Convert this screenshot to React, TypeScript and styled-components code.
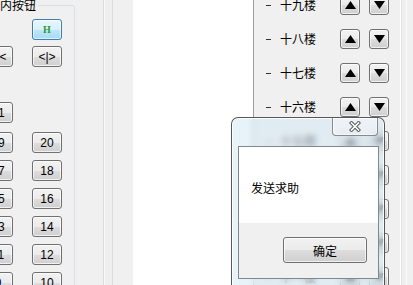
import React from 'react';
import styled, { createGlobalStyle, css } from 'styled-components';

const GlobalStyle = createGlobalStyle`
  html, body { margin: 0; padding: 0; }
  body {
    font-family: "Noto Sans CJK SC", "Liberation Sans", sans-serif;
    font-size: 12px;
    color: #000;
  }
`;

const Screen = styled.div`
  position: relative;
  width: 413px;
  height: 285px;
  overflow: hidden;
  display: flex;
  background: #f0f0f0;
`;

const LeftPane = styled.div`
  flex: none;
  width: 103px;
  height: 100%;
  overflow: hidden;
  background: #f0f0f0;
`;

const GroupBox = styled.fieldset`
  margin: -2px 0 0 -40px;
  width: 115px;
  height: 400px;
  box-sizing: border-box;
  border: 1px solid #d5dfe5;
  border-radius: 3px;
  padding: 7px 0 0 22px;
  display: flex;
  flex-direction: column;
`;

const Legend = styled.legend`
  margin-left: -9px;
  padding: 0 2px;
  font-size: 12px;
  line-height: 14px;
`;

const ButtonRow = styled.div<{ $gap: number }>`
  display: flex;
  gap: 19px;
  height: 21px;
  margin-top: ${p => p.$gap}px;
`;

const Slot = styled.div`
  flex: none;
  width: 30px;
  height: 21px;
`;

const winButton = css`
  box-sizing: border-box;
  border: 1px solid #707070;
  border-radius: 3px;
  background: linear-gradient(#f2f2f2 0%, #ebebeb 50%, #dddddd 51%, #cfcfcf 100%);
  box-shadow: inset 0 0 0 1px rgba(255, 255, 255, 0.7);
  display: flex;
  align-items: center;
  justify-content: center;
  padding: 0;
  color: #000;
`;

const PanelButton = styled.div<{ $focused?: boolean }>`
  ${winButton}
  width: 30px;
  height: 21px;
  font-family: "Liberation Sans", "Noto Sans CJK SC", sans-serif;
  font-size: 12px;
  white-space: nowrap;
  ${p =>
    p.$focused &&
    css`
      border-color: #3c7fb1;
      background: linear-gradient(#eaf6fd 0%, #d9f0fc 50%, #bee6fd 51%, #a7d9f5 100%);
      box-shadow: inset 0 0 0 1px rgba(255, 255, 255, 0.6);
    `}
`;

const AlarmGlyph = styled.span`
  font-family: "Liberation Serif", serif;
  font-weight: bold;
  font-size: 10px;
  color: #23a02a;
`;

const FrameEdge = styled.div`
  flex: none;
  width: 8px;
  height: 100%;
  background: #eeeeee;
  border-left: 1px solid #dcdcdc;
  border-right: 1px solid #dcdcdc;
  box-shadow: inset 1px 0 0 #fafafa;
`;

const GrayStrip = styled.div`
  flex: none;
  width: 20px;
  height: 100%;
  background: #f0f0f0;
`;

const WhiteArea = styled.div`
  flex: none;
  width: 120px;
  height: 100%;
  background: #ffffff;
`;

const RightPane = styled.div`
  flex: 1;
  display: flex;
  height: 100%;
  border-left: 1px solid #9c9c9c;
  background: #f0f0f0;
`;

const FloorList = styled.div`
  flex: none;
  display: flex;
  flex-direction: column;
  gap: 14px;
  margin-top: -5px;
  padding-left: 12px;
  width: 123px;
`;

const FloorRow = styled.div`
  display: flex;
  align-items: center;
  height: 20px;
`;

const Dash = styled.span`
  flex: none;
  width: 5px;
  height: 0;
  border-top: 1px solid #333;
  margin-right: 9px;
`;

const FloorName = styled.span`
  flex: none;
  width: 60px;
  font-size: 12px;
  line-height: 20px;
`;

const ArrowButton = styled.div<{ $spaced?: boolean }>`
  ${winButton}
  flex: none;
  width: 20px;
  height: 20px;
  margin-left: ${p => (p.$spaced ? 9 : 0)}px;
`;

const RightEdge = styled.div`
  margin-left: auto;
  width: 12px;
  height: 100%;
  border-left: 1px solid #ffffff;
  box-shadow: inset 1px 0 0 #e2e2e2, inset 5px 0 0 #f0f0f0, inset 6px 0 0 #fbfbfb;
`;

const Dialog = styled.div`
  position: absolute;
  left: 231px;
  top: 117px;
  width: 154px;
  height: 190px;
  box-sizing: border-box;
  border: 1px solid rgba(50, 50, 50, 0.8);
  border-radius: 7px 7px 0 0;
  background: rgba(214, 232, 244, 0.55);
  backdrop-filter: blur(3px);
  box-shadow: inset 0 0 0 1px rgba(255, 255, 255, 0.85);
  padding: 28px 5px 0 6px;
`;

const CloseButton = styled.div`
  position: absolute;
  top: 0;
  right: 6px;
  width: 46px;
  height: 18px;
  box-sizing: border-box;
  border: 1px solid rgba(70, 70, 70, 0.6);
  border-top: none;
  border-radius: 0 0 4px 4px;
  background: rgba(255, 255, 255, 0.35);
  box-shadow: inset 0 0 0 1px rgba(255, 255, 255, 0.6);
  display: flex;
  align-items: center;
  justify-content: center;
`;

const Client = styled.div`
  border: 1px solid #7d8891;
  display: flex;
  flex-direction: column;
  background: #ffffff;
`;

const MessageArea = styled.div`
  height: 76px;
  box-sizing: border-box;
  padding: 33px 0 0 12px;
  background: #ffffff;
  font-size: 12px;
  line-height: 16px;
`;

const ButtonBar = styled.div`
  height: 55px;
  box-sizing: border-box;
  padding: 14px 0 0 44px;
  background: #f0f0f0;
`;

const OkButton = styled.div`
  ${winButton}
  width: 84px;
  height: 26px;
  font-size: 12px;
`;

const Triangle = ({ up }: { up: boolean }) => (
  <svg width="11" height="8" viewBox="0 0 11 8">
    <polygon points={up ? '5.5,0 11,8 0,8' : '0,0 11,0 5.5,8'} fill="#000" />
  </svg>
);

const CloseGlyph = () => (
  <svg width="12" height="11" viewBox="0 0 12 11">
    <path d="M2.5 2 L9.5 9 M9.5 2 L2.5 9" stroke="#5a5a5a" strokeWidth="3.6" strokeLinecap="square" />
    <path d="M2.5 2 L9.5 9 M9.5 2 L2.5 9" stroke="#ffffff" strokeWidth="1.6" strokeLinecap="square" />
  </svg>
);

type Cell = React.ReactNode | null;
const panelRows: { gap: number; cells: [Cell, Cell]; focusRight?: boolean }[] = [
  { gap: 0, cells: [null, <AlarmGlyph>H</AlarmGlyph>], focusRight: true },
  { gap: 6, cells: ['>|<', '<|>'] },
  { gap: 35, cells: ['21', null] },
  { gap: 9, cells: ['19', '20'] },
  { gap: 7, cells: ['17', '18'] },
  { gap: 7, cells: ['15', '16'] },
  { gap: 7, cells: ['13', '14'] },
  { gap: 7, cells: ['11', '12'] },
  { gap: 7, cells: ['9', '10'] },
];

const floors = ['十九楼', '十八楼', '十七楼', '十六楼', '十五楼', '十四楼', '十三楼', '十二楼', '十一楼'];

export default function App() {
  return (
    <>
      <GlobalStyle />
      <Screen>
        <LeftPane>
          <GroupBox>
            <Legend>电梯内按钮</Legend>
            {panelRows.map((row, i) => (
              <ButtonRow key={i} $gap={row.gap}>
                {row.cells.map((c, j) =>
                  c === null ? (
                    <Slot key={j} />
                  ) : (
                    <PanelButton key={j} $focused={j === 1 && row.focusRight}>
                      {c}
                    </PanelButton>
                  )
                )}
              </ButtonRow>
            ))}
          </GroupBox>
        </LeftPane>
        <FrameEdge />
        <GrayStrip />
        <WhiteArea />
        <RightPane>
          <FloorList>
            {floors.map(f => (
              <FloorRow key={f}>
                <Dash />
                <FloorName>{f}</FloorName>
                <ArrowButton>
                  <Triangle up />
                </ArrowButton>
                <ArrowButton $spaced>
                  <Triangle up={false} />
                </ArrowButton>
              </FloorRow>
            ))}
          </FloorList>
          <RightEdge />
        </RightPane>
        <Dialog>
          <CloseButton>
            <CloseGlyph />
          </CloseButton>
          <Client>
            <MessageArea>发送求助</MessageArea>
            <ButtonBar>
              <OkButton>确定</OkButton>
            </ButtonBar>
          </Client>
        </Dialog>
      </Screen>
    </>
  );
}
